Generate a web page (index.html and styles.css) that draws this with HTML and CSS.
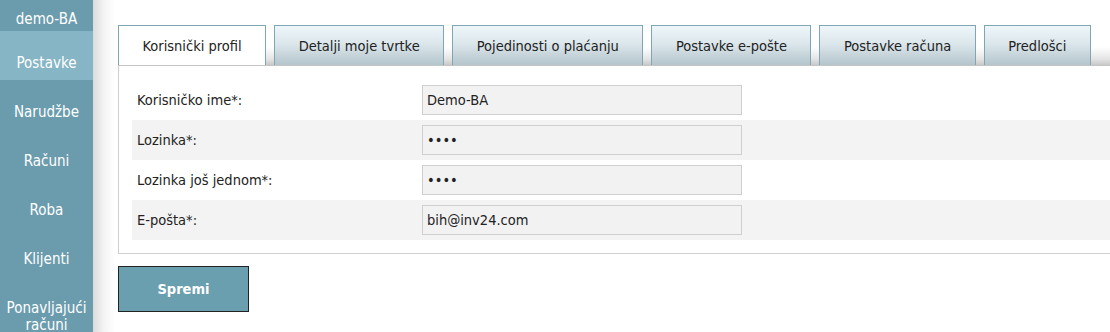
FILE: index.html
```html
<!DOCTYPE html>
<html lang="hr">
<head>
<meta charset="utf-8">
<title>Postavke</title>
<link rel="stylesheet" href="styles.css">
</head>
<body>
<div class="layout">
  <nav class="sidebar">
    <div class="nav-user">demo-BA</div>
    <a class="nav-item active">Postavke</a>
    <a class="nav-item">Narudžbe</a>
    <a class="nav-item">Računi</a>
    <a class="nav-item">Roba</a>
    <a class="nav-item">Klijenti</a>
    <a class="nav-item">Ponavljajući<br>računi</a>
  </nav>
  <div class="shade"></div>
  <main class="main">
    <div class="tabs">
      <div class="tab active">Korisnički profil</div>
      <div class="tab">Detalji moje tvrtke</div>
      <div class="tab">Pojedinosti o plaćanju</div>
      <div class="tab">Postavke e-pošte</div>
      <div class="tab">Postavke računa</div>
      <div class="tab">Predlošci</div>
    </div>
    <div class="panel">
      <div class="row">
        <label class="label">Korisničko ime*:</label>
        <input class="field" type="text" value="Demo-BA">
      </div>
      <div class="row alt">
        <label class="label">Lozinka*:</label>
        <input class="field" type="password" value="demo">
      </div>
      <div class="row">
        <label class="label">Lozinka još jednom*:</label>
        <input class="field" type="password" value="demo">
      </div>
      <div class="row alt">
        <label class="label">E-pošta*:</label>
        <input class="field" type="text" value="bih@inv24.com">
      </div>
    </div>
    <button class="save">Spremi</button>
  </main>
</div>
</body>
</html>
```
FILE: styles.css
```css
html, body {
  margin: 0;
  padding: 0;
  background: #fff;
  overflow: hidden;
}
body {
  font-family: "DejaVu Sans Condensed", "DejaVu Sans", sans-serif;
  font-size: 14.5px;
  color: #222;
}
.layout {
  display: flex;
  height: 332px;
}
.sidebar {
  width: 93px;
  flex: none;
  background: #6b9cae;
  display: flex;
  flex-direction: column;
  color: #fff;
  font-size: 15px;
  text-align: center;
}
.nav-user {
  height: 31px;
  box-sizing: border-box;
  padding-top: 11px;
  line-height: 17px;
}
.nav-item {
  display: block;
  box-sizing: border-box;
  height: 49px;
  flex: none;
  padding-top: 24px;
  line-height: 17px;
}
.nav-item.active {
  background: #86b5c6;
}
.shade {
  width: 22px;
  flex: none;
  background: linear-gradient(to right, #dcdcdc, #f4f4f4 50%, #fff);
}
.main {
  flex: none;
  padding: 25px 0 0 3px;
  width: 1010px;
}
.tabs {
  display: flex;
  gap: 8px;
  height: 40px;
  background: linear-gradient(to bottom, #fff 55%, #e4e4e4 85%, #c8c8c8 100%);
}
.tab {
  box-sizing: border-box;
  height: 40px;
  padding: 0 23.5px;
  display: flex;
  align-items: center;
  border: 1px solid #7fa6b3;
  border-bottom: none;
  background: linear-gradient(to bottom, #eef6f9 0%, #dce7ec 45%, #b4c5cc 100%);
  color: #222;
  white-space: nowrap;
}
.tab.active {
  background: #fff;
}
.panel {
  border: 1px solid #cfcfcf;
  border-top: 1px solid #c4c4c4;
  padding: 14px 0 13px 13px;
}
.row {
  display: flex;
  align-items: center;
  height: 40px;
  padding-left: 5px;
}
.row.alt {
  background: #f3f3f3;
}
.label {
  width: 285px;
  flex: none;
}
.field {
  box-sizing: border-box;
  width: 320px;
  height: 30px;
  border: 1px solid #cfcfcf;
  background: #f2f2f2;
  padding: 0 4px;
  font-family: inherit;
  font-size: 14.5px;
  color: #222;
  margin: 0;
}
.save {
  margin-top: 12px;
  width: 131px;
  height: 46px;
  background: #6a9fb0;
  border: 1px solid #222;
  color: #fff;
  font-family: "DejaVu Sans Condensed", "DejaVu Sans", sans-serif;
  font-weight: bold;
  font-size: 14.5px;
}
```
